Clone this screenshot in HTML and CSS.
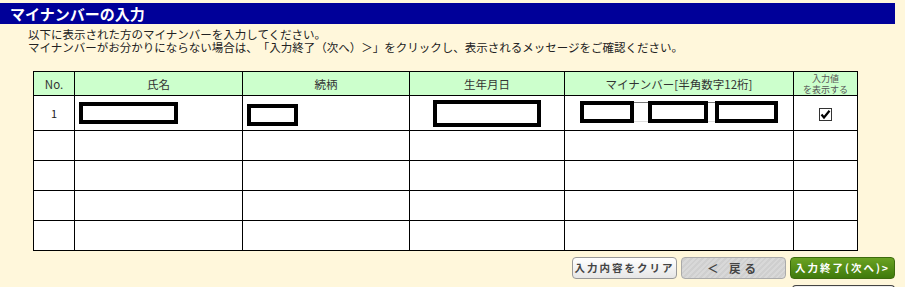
FILE: index.html
```html
<!DOCTYPE html>
<html lang="ja">
<head>
  <meta charset="UTF-8">
  <title>マイナンバーの入力</title>
  <link rel="stylesheet" href="styles.css">
</head>
<body>
  <div class="page">
    <h1 class="title">マイナンバーの入力</h1>

    <div class="intro">
      <p>以下に表示された方のマイナンバーを入力してください。</p>
      <p>マイナンバーがお分かりにならない場合は、「入力終了（次へ）＞」をクリックし、表示されるメッセージをご確認ください。</p>
    </div>

    <table class="grid">
      <colgroup>
        <col class="c-no">
        <col class="c-name">
        <col class="c-rel">
        <col class="c-birth">
        <col class="c-num">
        <col class="c-show">
      </colgroup>
      <thead>
        <tr>
          <th>No.</th>
          <th>氏名</th>
          <th>続柄</th>
          <th>生年月日</th>
          <th>マイナンバー[半角数字12桁]</th>
          <th class="small">入力値<br>を表示する</th>
        </tr>
      </thead>
      <tbody>
        <tr class="first">
          <td class="no">1</td>
          <td><span class="mask m-name"></span></td>
          <td><span class="mask m-rel"></span></td>
          <td class="center"><span class="mask m-birth"></span></td>
          <td class="center">
            <div class="num-group">
              <span class="mask m-num1"></span>
              <span class="sep"></span>
              <span class="mask m-num2"></span>
              <span class="sep short"></span>
              <span class="mask m-num3"></span>
            </div>
          </td>
          <td class="center">
            <span class="check">
              <svg width="13" height="13" viewBox="0 0 13 13">
                <rect x="0.5" y="0.5" width="12" height="12" fill="#fff" stroke="#333"/>
                <path d="M2.5 6.5 L5 9.5 L10.5 2.8" fill="none" stroke="#000" stroke-width="2.2"/>
              </svg>
            </span>
          </td>
        </tr>
        <tr><td></td><td></td><td></td><td></td><td></td><td></td></tr>
        <tr><td></td><td></td><td></td><td></td><td></td><td></td></tr>
        <tr><td></td><td></td><td></td><td></td><td></td><td></td></tr>
        <tr><td></td><td></td><td></td><td></td><td></td><td></td></tr>
      </tbody>
    </table>

    <div class="actions">
      <button class="btn btn-clear">入力内容をクリア</button>
      <button class="btn btn-back">＜ 戻る</button>
      <button class="btn btn-next">入力終了(次へ)&gt;</button>
    </div>
    <div class="actions more">
      <span class="btn btn-extra"></span>
    </div>
  </div>
</body>
</html>
```

FILE: styles.css
```css
body {
  margin: 0;
  background-color: #fff7db;
  font-family: "Noto Sans CJK JP", "DejaVu Sans", sans-serif;
  font-size: 12px;
  color: #222;
  text-spacing-trim: space-all;
}
.page {
  width: 905px;
  padding-top: 3px;
  overflow: hidden;
}
.title {
  margin: 0;
  width: 885px;
  height: 21px;
  padding-left: 10px;
  background-color: #000099;
  color: #fff;
  font-size: 15px;
  font-weight: bold;
  line-height: 21px;
}
.intro {
  padding: 4px 0 0 28px;
}
.intro p {
  margin: 0;
  line-height: 13px;
  font-size: 11.5px;
}
.grid {
  margin: 17px 0 0 33px;
  width: 824px;
  border-collapse: collapse;
  table-layout: fixed;
  background: #fff;
}
.c-no { width: 41px; }
.c-name { width: 168px; }
.c-rel { width: 167px; }
.c-birth { width: 155px; }
.c-num { width: 229px; }
.c-show { width: 64px; }
.grid th, .grid td {
  border: 1px solid #000;
  padding: 0;
}
.grid th {
  height: 23px;
  background-color: #ccffcc;
  font-weight: normal;
  color: #333;
  font-size: 11.5px;
}
.grid th.small {
  font-size: 9px;
  line-height: 11px;
  color: #555;
}
.grid td {
  height: 29px;
  vertical-align: middle;
}
.grid tr.first td {
  height: 34px;
}
.grid td.no {
  text-align: center;
  font-size: 11px;
}
.grid td.center {
  text-align: center;
}
.mask {
  display: inline-block;
  box-sizing: border-box;
  border: 4px solid #000;
  background: #fff;
  vertical-align: middle;
}
.m-name { width: 99px; height: 22px; margin-left: 4px; }
.m-rel { width: 51px; height: 22px; margin-left: 4px; margin-top: 4px; }
.m-birth { width: 108px; height: 27px; }
.m-num1 { width: 54px; height: 22px; }
.m-num2 { width: 60px; height: 22px; }
.m-num3 { width: 63px; height: 22px; }
.num-group {
  display: flex;
  justify-content: center;
  align-items: center;
  margin-top: -2px;
}
.sep {
  width: 14px;
  height: 20px;
  border-top: 1px solid #777;
  border-bottom: 1px solid #ddd;
  box-sizing: border-box;
}
.sep.short {
  width: 7px;
}
.check {
  display: inline-block;
  height: 13px;
  margin-top: -4px;
  vertical-align: middle;
}
.actions {
  display: flex;
  justify-content: flex-end;
  gap: 4px;
  width: 895px;
  margin-top: 6px;
}
.actions.more {
  margin-top: 6px;
}
.btn {
  box-sizing: border-box;
  width: 105px;
  height: 22px;
  border-radius: 4px;
  font-family: "Noto Sans CJK JP", sans-serif;
  font-size: 10.5px;
  font-weight: bold;
  letter-spacing: 2px;
  padding: 0;
  line-height: 20px;
}
.btn-clear {
  border: 1px solid #999;
  background: linear-gradient(#ffffff, #e6e6e6);
  color: #444;
}
.btn-back {
  border: 1px solid #aaa;
  background: repeating-linear-gradient(135deg, #d8d8d8 0 2px, #cfcfcf 2px 4px);
  color: #444;
  font-size: 11.5px;
  letter-spacing: 4px;
}
.btn-next {
  border: 1px solid #3d6b0d;
  background: linear-gradient(#6aa222, #3f7a0c);
  color: #fff;
}
.btn-extra {
  display: block;
  width: 103px;
  height: 10px;
  border: 1px solid #444;
  border-bottom: none;
  border-radius: 4px 4px 0 0;
  background: #eee;
}
```
